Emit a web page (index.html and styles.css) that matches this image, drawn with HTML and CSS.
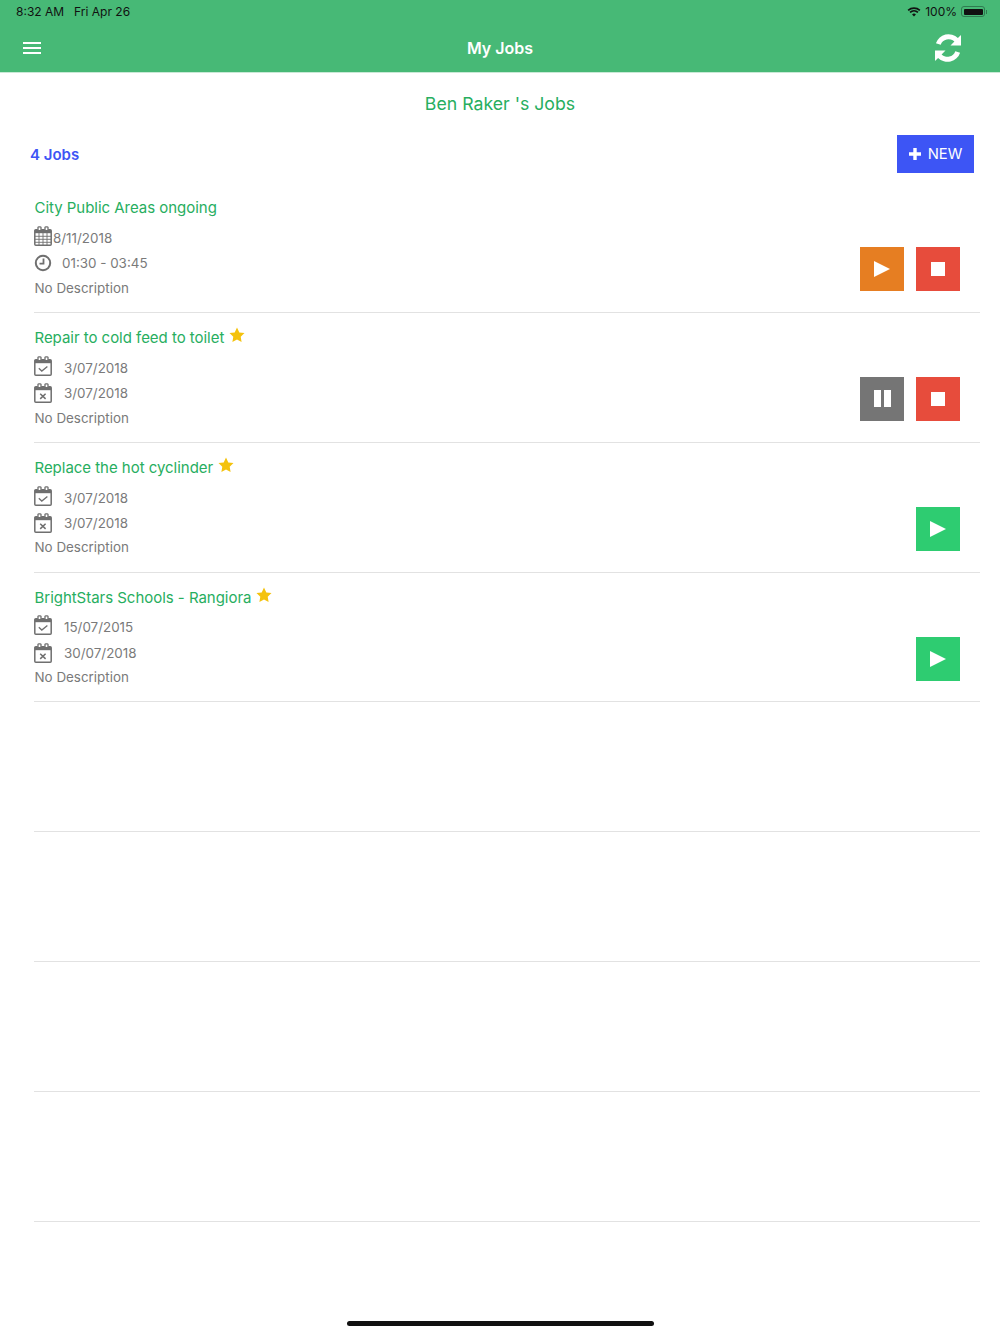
FILE: index.html
```html
<!DOCTYPE html>
<html lang="en">
<head>
<meta charset="utf-8">
<title>My Jobs</title>
<link rel="stylesheet" href="styles.css">
</head>
<body>
<svg class="defs" width="0" height="0">
  <symbol id="cal-base" viewBox="0 0 18 20">
    <path fill="none" stroke="#6f6f6f" stroke-width="1.500" d="M3.800 3.700H1.800a1 1 0 0 0-1 1v13.500a1 1 0 0 0 1 1h14.400a1 1 0 0 0 1-1V4.700a1 1 0 0 0-1-1h-2M7.200 3.700h3.600"/>
    <path fill="#6f6f6f" d="M1 4h16v3.200H1z"/>
    <path fill="none" stroke="#6f6f6f" stroke-width="1.300" d="M4 4.600V1.800a.7.700 0 0 1 .7-.9h1.600a.7.700 0 0 1 .7.900v2.800M11 4.600V1.800a.7.700 0 0 1 .7-.9h1.600a.7.700 0 0 1 .7.900v2.800"/>
  </symbol>
  <symbol id="cal-check" viewBox="0 0 18 20">
    <use href="#cal-base" width="18" height="20"/>
    <path d="M4.800 12.300l3 2.800 5.600-4.700" fill="none" stroke="#6f6f6f" stroke-width="1.300"/>
  </symbol>
  <symbol id="cal-x" viewBox="0 0 18 20">
    <use href="#cal-base" width="18" height="20"/>
    <path d="M6.200 10.700l5.400 5.200M11.600 10.700l-5.400 5.200" fill="none" stroke="#6f6f6f" stroke-width="1.500"/>
  </symbol>
  <symbol id="star" viewBox="0 0 16 16">
    <path fill="#f4c20d" d="M8 .5l2.300 4.900 5.200.7-3.800 3.700.9 5.300L8 12.500l-4.600 2.600.9-5.300L.5 6.100l5.200-.7z"/>
  </symbol>
  <symbol id="play" viewBox="0 0 16 16"><path fill="#fff" d="M0 0l16 8-16 8z"/></symbol>
  <symbol id="stop" viewBox="0 0 14 14"><rect width="14" height="14" fill="#fff"/></symbol>
</svg>

<header class="topbar">
  <div class="status">
    <div class="status-left"><span>8:32 AM</span><span>Fri Apr 26</span></div>
    <div class="status-right">
      <svg class="wifi" width="14" height="10" viewBox="0 0 16 12"><path fill="#111" d="M8 11.500L5.700 9a3.400 3.400 0 0 1 4.600 0zM3.900 7.200a6 6 0 0 1 8.200 0l1.300-1.400a8 8 0 0 0-10.800 0zM1.600 4.800a9.500 9.500 0 0 1 12.800 0L15.700 3.400a11.400 11.400 0 0 0-15.400 0z"/></svg>
      <span>100%</span>
      <span class="battery"><span class="battery-fill"></span></span>
    </div>
  </div>
  <div class="navbar">
    <button class="nav-btn menu" aria-label="Menu"><span></span><span></span><span></span></button>
    <h1>My Jobs</h1>
    <button class="nav-btn refresh" aria-label="Refresh">
      <svg width="28" height="28" viewBox="0 0 28 28"><path fill="#fff" d="M27 1v10.500H16.500l3.900-3.900A8.300 8.300 0 0 0 6.700 10.800L1.900 9.300A13.200 13.200 0 0 1 23.900 4.100zM1 27V16.500h10.500l-3.900 3.900a8.300 8.300 0 0 0 13.700-3.200l4.800 1.500A13.200 13.200 0 0 1 4.100 23.900z"/></svg>
    </button>
  </div>
</header>

<main>
  <h2 class="page-title">Ben Raker 's Jobs</h2>
  <div class="toolbar">
    <span class="count">4 Jobs</span>
    <button class="new-btn"><svg width="12" height="12" viewBox="0 0 12 12"><path fill="#fff" d="M4.300 0h3.400v4.300H12v3.400H7.700V12H4.300V7.700H0V4.300h4.300z"/></svg>NEW</button>
  </div>

  <ul class="jobs">
    <li class="job">
      <div class="job-info">
        <div class="job-title">City Public Areas ongoing</div>
        <div class="line first tight">
          <svg class="cal" width="18" height="20" viewBox="0 0 18 20"><use href="#cal-base" width="18" height="20"/><path fill="none" stroke="#6f6f6f" stroke-width=".9" d="M1 10.300h16M1 13.300h16M1 16.300h16M5 7v12M9 7v12M13 7v12"/></svg>
          <span>8/11/2018</span>
        </div>
        <div class="line timed">
          <svg width="18" height="18" viewBox="0 0 18 18"><circle cx="9" cy="9" r="7.200" fill="none" stroke="#6f6f6f" stroke-width="2"/><path d="M9.500 4.500v5.200H5.500" fill="none" stroke="#6f6f6f" stroke-width="1.800"/></svg>
          <span>01:30 - 03:45</span>
        </div>
        <div class="desc">No Description</div>
      </div>
      <div class="actions">
        <button class="act orange"><svg width="16" height="16"><use href="#play"/></svg></button>
        <button class="act red"><svg width="14" height="14"><use href="#stop"/></svg></button>
      </div>
    </li>
    <li class="job">
      <div class="job-info">
        <div class="job-title">Repair to cold feed to toilet<svg class="star" width="16" height="16"><use href="#star"/></svg></div>
        <div class="line first"><svg class="cal" width="18" height="20"><use href="#cal-check"/></svg><span>3/07/2018</span></div>
        <div class="line"><svg class="cal" width="18" height="20"><use href="#cal-x"/></svg><span>3/07/2018</span></div>
        <div class="desc">No Description</div>
      </div>
      <div class="actions">
        <button class="act grey"><span class="pause"></span><span class="pause"></span></button>
        <button class="act red"><svg width="14" height="14"><use href="#stop"/></svg></button>
      </div>
    </li>
    <li class="job">
      <div class="job-info">
        <div class="job-title">Replace the hot cyclinder<svg class="star" width="16" height="16"><use href="#star"/></svg></div>
        <div class="line first"><svg class="cal" width="18" height="20"><use href="#cal-check"/></svg><span>3/07/2018</span></div>
        <div class="line"><svg class="cal" width="18" height="20"><use href="#cal-x"/></svg><span>3/07/2018</span></div>
        <div class="desc">No Description</div>
      </div>
      <div class="actions">
        <button class="act green"><svg width="16" height="16"><use href="#play"/></svg></button>
      </div>
    </li>
    <li class="job">
      <div class="job-info">
        <div class="job-title">BrightStars Schools - Rangiora<svg class="star" width="16" height="16"><use href="#star"/></svg></div>
        <div class="line first"><svg class="cal" width="18" height="20"><use href="#cal-check"/></svg><span>15/07/2015</span></div>
        <div class="line"><svg class="cal" width="18" height="20"><use href="#cal-x"/></svg><span>30/07/2018</span></div>
        <div class="desc">No Description</div>
      </div>
      <div class="actions">
        <button class="act green"><svg width="16" height="16"><use href="#play"/></svg></button>
      </div>
    </li>
    <li class="job empty"></li>
    <li class="job empty"></li>
    <li class="job empty"></li>
    <li class="job empty"></li>
  </ul>
</main>
<div class="home-indicator"></div>
</body>
</html>
```

FILE: styles.css
```css
* { box-sizing: border-box; }
html, body { margin: 0; padding: 0; }
body {
  width: 1000px;
  height: 1334px;
  position: relative;
  overflow: hidden;
  background: #fff;
  font-family: Inter, "Liberation Sans", sans-serif;
  color: #7a7a7a;
}
.defs { position: absolute; }
button { border: 0; padding: 0; margin: 0; font: inherit; cursor: pointer; }

.topbar {
  height: 73px;
  background: #47b976;
  border-bottom: 1px solid #c9e9d6;
}
.status {
  height: 24px;
  padding: 0 15px 1px 16px;
  display: flex;
  justify-content: space-between;
  align-items: center;
  font-size: 12px;
  color: #111;
}
.status-left { display: flex; gap: 10px; }
.status-right { display: flex; align-items: center; gap: 4px; }
.battery {
  position: relative;
  width: 24px;
  height: 11px;
  padding: 1.500px;
  border: 1px solid #2f7b50;
  border-radius: 3px;
  display: flex;
}
.battery::after {
  content: "";
  position: absolute;
  right: -3px;
  top: 2.500px;
  width: 1.500px;
  height: 4px;
  background: #2f7b50;
}
.battery-fill { flex: 1; background: #111; border-radius: 1px; }

.navbar {
  height: 48px;
  padding: 0 23px;
  display: grid;
  grid-template-columns: 1fr auto 1fr;
  align-items: center;
}
.navbar h1 {
  margin: 0;
  font-size: 16px;
  font-weight: 600;
  color: #fff;
}
.nav-btn { background: none; display: flex; }
.refresh { justify-self: end; margin-right: 15px; }
.menu { flex-direction: column; gap: 3px; width: 18px; margin-top: -1px; }
.menu span { display: block; height: 2px; background: #fff; }

.page-title {
  margin: 0;
  padding-top: 19px;
  height: 56px;
  text-align: center;
  font-size: 17.700px;
  line-height: 24px;
  font-weight: 400;
  color: #27ae60;
}
.toolbar {
  height: 54.200px;
  padding: 0 26px 5px 30px;
  display: flex;
  justify-content: space-between;
  align-items: center;
}
.count { font-size: 15px; font-weight: 600; color: #3d55f5; padding-top: 1px; }
.new-btn {
  width: 77px;
  height: 38px;
  padding-top: 1px;
  background: #3d55f5;
  color: #fff;
  font-size: 14.800px;
  display: flex;
  align-items: center;
  justify-content: center;
  gap: 7px;
}

.jobs {
  list-style: none;
  margin: 0 20px 0 34px;
  padding: 0;
}
.job {
  height: 129.800px;
  border-bottom: 1px solid #e2e2e2;
  display: flex;
  justify-content: space-between;
  align-items: flex-end;
  padding-bottom: 20.850px;
  padding-right: 20px;
}
.job-info { align-self: flex-start; padding-top: 15px; font-size: 13.400px; }
.job-title {
  padding-left: .5px;
  font-size: 15px;
  letter-spacing: -0.030px;
  line-height: 20px;
  color: #27ae60;
  display: flex;
  align-items: center;
}
.star { margin: -6px 0 0 5px; }
.line {
  height: 25.500px;
  display: flex;
  align-items: center;
  gap: 12px;
}
.line svg { flex: none; }
.line.first .cal { margin-bottom: 4px; }
.line.first { margin-top: 7px; }
.line.tight { gap: 1px; }
.line.timed { gap: 10px; }
.desc { margin-top: -.450px; padding-left: .5px; line-height: 24px; height: 24px; }
.actions { display: flex; gap: 12px; }
.act {
  width: 44px;
  height: 44px;
  display: flex;
  align-items: center;
  justify-content: center;
}
.orange { background: #e67e22; }
.red { background: #e74c3c; }
.grey { background: #757575; gap: 3px; }
.green { background: #2ecc71; }
.pause { width: 7px; height: 17px; background: #fff; }
.home-indicator {
  position: absolute;
  left: 347px;
  top: 1321px;
  width: 307px;
  height: 5px;
  border-radius: 3px;
  background: #111;
}
```
